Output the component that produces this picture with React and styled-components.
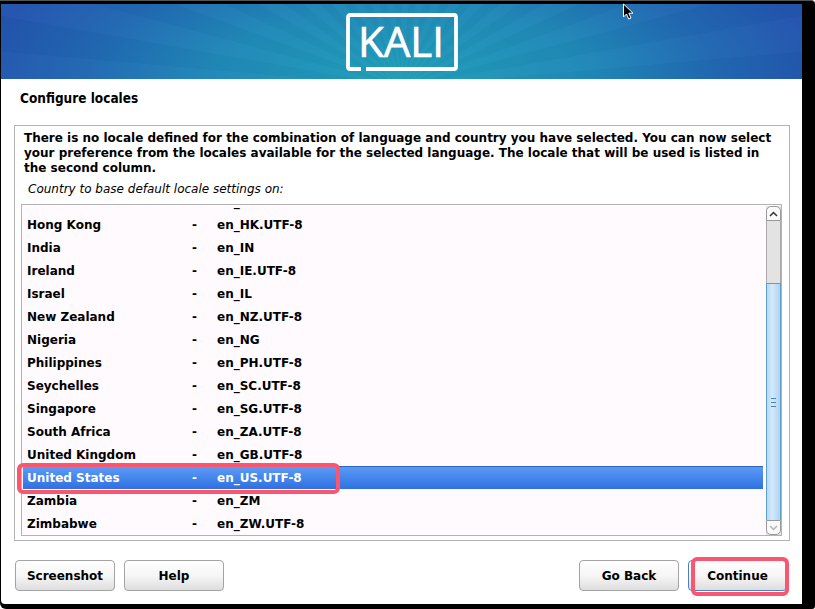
import styled, { createGlobalStyle } from "styled-components";

const GlobalStyle = createGlobalStyle`
  html, body {
    margin: 0;
    padding: 0;
    background: #fff;
  }
`;

// Black frame round the installer window
const Frame = styled.div`
  position: relative;
  width: 815px;
  height: 609px;
  box-sizing: border-box;
  padding: 4px 13px 5px 1px;
  background: #000;
  border-top: 1px solid #555;
  border-radius: 0 4px 3px 6px;
  overflow: hidden;
  font-family: "DejaVu Sans", sans-serif;
  font-size: 12px;
  color: #000;
`;

const Window = styled.div`
  display: flex;
  flex-direction: column;
  height: 600px;
  margin-top: -1px;
  background: #fff;
  border-radius: 0 0 0 4px;
`;

const Banner = styled.header`
  display: flex;
  justify-content: center;
  height: 75px;
  flex: none;
  background:
    repeating-conic-gradient(from 270deg at 50% 110%, rgba(255, 255, 255, 0.015) 0deg 5deg, rgba(0, 0, 0, 0.015) 5deg 10deg),
    radial-gradient(ellipse 420px 170px at 50% 100%, #1f9fb9 0%, #2088b7 45%, #2168b2 75%, #2354ae 100%);
`;

const Logo = styled.svg`
  width: 112px;
  height: 58px;
  margin-top: 9px;
`;

const Title = styled.h1`
  margin: 0;
  padding: 11px 0 0 19px;
  height: 35px;
  flex: none;
  box-sizing: border-box;
  font-family: "DejaVu Sans Condensed", "DejaVu Sans", sans-serif;
  font-size: 13.5px;
  font-weight: 700;
  line-height: 16px;
`;

const Panel = styled.section`
  display: flex;
  flex-direction: column;
  height: 416px;
  flex: none;
  box-sizing: border-box;
  margin: 11px 12px 0 13px;
  padding: 5px 7px 4px 6px;
  border: 1px solid #b3b3b3;
`;

const Message = styled.p`
  margin: 0;
  padding: 0 2px 0 3px;
  font-weight: 700;
  line-height: 15px;
`;

const Prompt = styled.div`
  margin: 5px 0 0 7px;
  font-style: italic;
  line-height: 16px;
  height: 23px;
`;

const ListBox = styled.div`
  display: flex;
  flex: 1;
  min-height: 0;
  border: 1px solid #b3b3b3;
  background: #fefafe;
`;

// Scrolled list: the row above Hong Kong is clipped at its baseline
const Rows = styled.div`
  flex: 1;
  min-width: 0;
  overflow: hidden;
  margin-top: 2px;
  padding: 0 3px 0 1px;
`;

const RowsInner = styled.div`
  margin-top: -17px;
`;

const Row = styled.div`
  display: grid;
  grid-template-columns: 165px 25px 1fr;
  align-items: center;
  box-sizing: border-box;
  height: 23px;
  padding-left: 4px;
  font-weight: 700;
  color: ${(p) => (p.$selected ? "#fff" : "#000")};
  background: ${(p) =>
    p.$selected ? "linear-gradient(#5c9cf6, #2f70e2)" : "transparent"};
  box-shadow: ${(p) => (p.$selected ? "inset 0 1px 0 #2f63b8" : "none")};
`;

const ScrollBar = styled.div`
  display: flex;
  flex-direction: column;
  width: 15px;
  flex: none;
  margin-top: 1px;
  background: #e3e3e3;
`;

const ScrollButton = styled.div`
  display: flex;
  align-items: center;
  justify-content: center;
  height: 15px;
  flex: none;
  box-sizing: border-box;
  border: 1px solid #9a9a9a;
  border-radius: ${(p) => (p.$up ? "5px 5px 0 0" : "0 0 5px 5px")};
  background: #fafafa;
`;

const Trough = styled.div`
  flex: 1;
  display: flex;
  flex-direction: column;
  box-sizing: border-box;
  border-left: 1px solid #a9a9a9;
  border-right: 1px solid #a9a9a9;
`;

const TroughGap = styled.div`
  height: 62px;
  flex: none;
`;

const Thumb = styled.div`
  flex: 1;
  display: flex;
  align-items: center;
  justify-content: center;
  margin: 0 -1px;
  border: 1px solid #5f9fc6;
  border-bottom: none;
  background: linear-gradient(90deg, #b6d8f5, #d3e9fb 40%, #aed3f2);
`;

const Grip = styled.div`
  width: 5px;
  height: 7px;
  border-top: 1px solid #4f81ad;
  border-bottom: 1px solid #4f81ad;
  background: linear-gradient(transparent 3px, #4f81ad 3px, #4f81ad 4px, transparent 4px);
`;

const Footer = styled.footer`
  display: flex;
  justify-content: space-between;
  padding: 19px 15px 0 14px;
`;

const ButtonGroup = styled.div`
  display: flex;
  gap: 9px;
`;

const Button = styled.button`
  width: ${(p) => p.$width || 100}px;
  height: 31px;
  padding: 0;
  box-sizing: border-box;
  border: 1px solid ${(p) => (p.$focused ? "#4a7fd0" : "#a3a3a3")};
  border-radius: 4px;
  background: linear-gradient(#fefefe, #f6f6f6 50%, #dedede);
  font-family: "DejaVu Sans", sans-serif;
  font-size: 12px;
  font-weight: 700;
  color: #000;
`;

// Red annotation boxes drawn on top of the screenshot
const Highlight = styled.div`
  position: absolute;
  left: ${(p) => p.$x}px;
  top: ${(p) => p.$y}px;
  width: ${(p) => p.$w}px;
  height: ${(p) => p.$h}px;
  box-sizing: border-box;
  border: 4px solid #fb5670;
  border-radius: 6px;
`;

const Cursor = styled.svg`
  position: absolute;
  left: 622px;
  top: 2px;
  width: 12px;
  height: 18px;
`;

const countries = [
  ["Ghana", "en_GH"],
  ["Hong Kong", "en_HK.UTF-8"],
  ["India", "en_IN"],
  ["Ireland", "en_IE.UTF-8"],
  ["Israel", "en_IL"],
  ["New Zealand", "en_NZ.UTF-8"],
  ["Nigeria", "en_NG"],
  ["Philippines", "en_PH.UTF-8"],
  ["Seychelles", "en_SC.UTF-8"],
  ["Singapore", "en_SG.UTF-8"],
  ["South Africa", "en_ZA.UTF-8"],
  ["United Kingdom", "en_GB.UTF-8"],
  ["United States", "en_US.UTF-8"],
  ["Zambia", "en_ZM"],
  ["Zimbabwe", "en_ZW.UTF-8"],
];

const App = () => {
  return (
    <>
      <GlobalStyle />
      <Frame>
        <Window>
          <Banner>
            <Logo viewBox="0 0 112 58">
              <path
                d="M15 56H4a2 2 0 0 1-2-2V4a2 2 0 0 1 2-2h104a2 2 0 0 1 2 2v50a2 2 0 0 1-2 2H20"
                fill="none"
                stroke="#fff"
                strokeWidth="3.8"
              />
              <text
                x="55"
                y="44"
                textAnchor="middle"
                fill="#fff"
                stroke="#fff"
                strokeWidth="0.7"
                fontFamily="'Open Sans', sans-serif"
                fontSize="42"
              >
                KALI
              </text>
            </Logo>
          </Banner>
          <Title>Configure locales</Title>
          <Panel>
            <Message>
              There is no locale defined for the combination of language and
              country you have selected. You can now select your preference from
              the locales available for the selected language. The locale that
              will be used is listed in the second column.
            </Message>
            <Prompt>Country to base default locale settings on:</Prompt>
            <ListBox>
              <Rows>
                <RowsInner>
                  {countries.map(([name, locale]) => (
                    <Row key={name} $selected={name === "United States"}>
                      <span>{name}</span>
                      <span>-</span>
                      <span>{locale}</span>
                    </Row>
                  ))}
                </RowsInner>
              </Rows>
              <ScrollBar>
                <ScrollButton $up>
                  <svg width="9" height="6" viewBox="0 0 9 6">
                    <path d="M1 5l3.5-3.5L8 5" fill="none" stroke="#333" strokeWidth="1.5" />
                  </svg>
                </ScrollButton>
                <Trough>
                  <TroughGap />
                  <Thumb>
                    <Grip />
                  </Thumb>
                </Trough>
                <ScrollButton>
                  <svg width="9" height="6" viewBox="0 0 9 6">
                    <path d="M1 1l3.5 3.5L8 1" fill="none" stroke="#b5b5b5" strokeWidth="1.5" />
                  </svg>
                </ScrollButton>
              </ScrollBar>
            </ListBox>
          </Panel>
          <Footer>
            <ButtonGroup>
              <Button>Screenshot</Button>
              <Button>Help</Button>
            </ButtonGroup>
            <ButtonGroup>
              <Button>Go Back</Button>
              <Button $focused $width={99}>Continue</Button>
            </ButtonGroup>
          </Footer>
        </Window>
        <Highlight $x={17} $y={462} $w={323} $h={31} />
        <Highlight $x={691} $y={556} $w={98} $h={39} />
        <Cursor viewBox="0 0 12 18">
          <path
            d="M1.5 1v13l3-3 2.2 5 2.3-1-2.2-4.8h4.2z"
            fill="#000"
            stroke="#fff"
            strokeWidth="1"
          />
        </Cursor>
      </Frame>
    </>
  );
};

export default App;
